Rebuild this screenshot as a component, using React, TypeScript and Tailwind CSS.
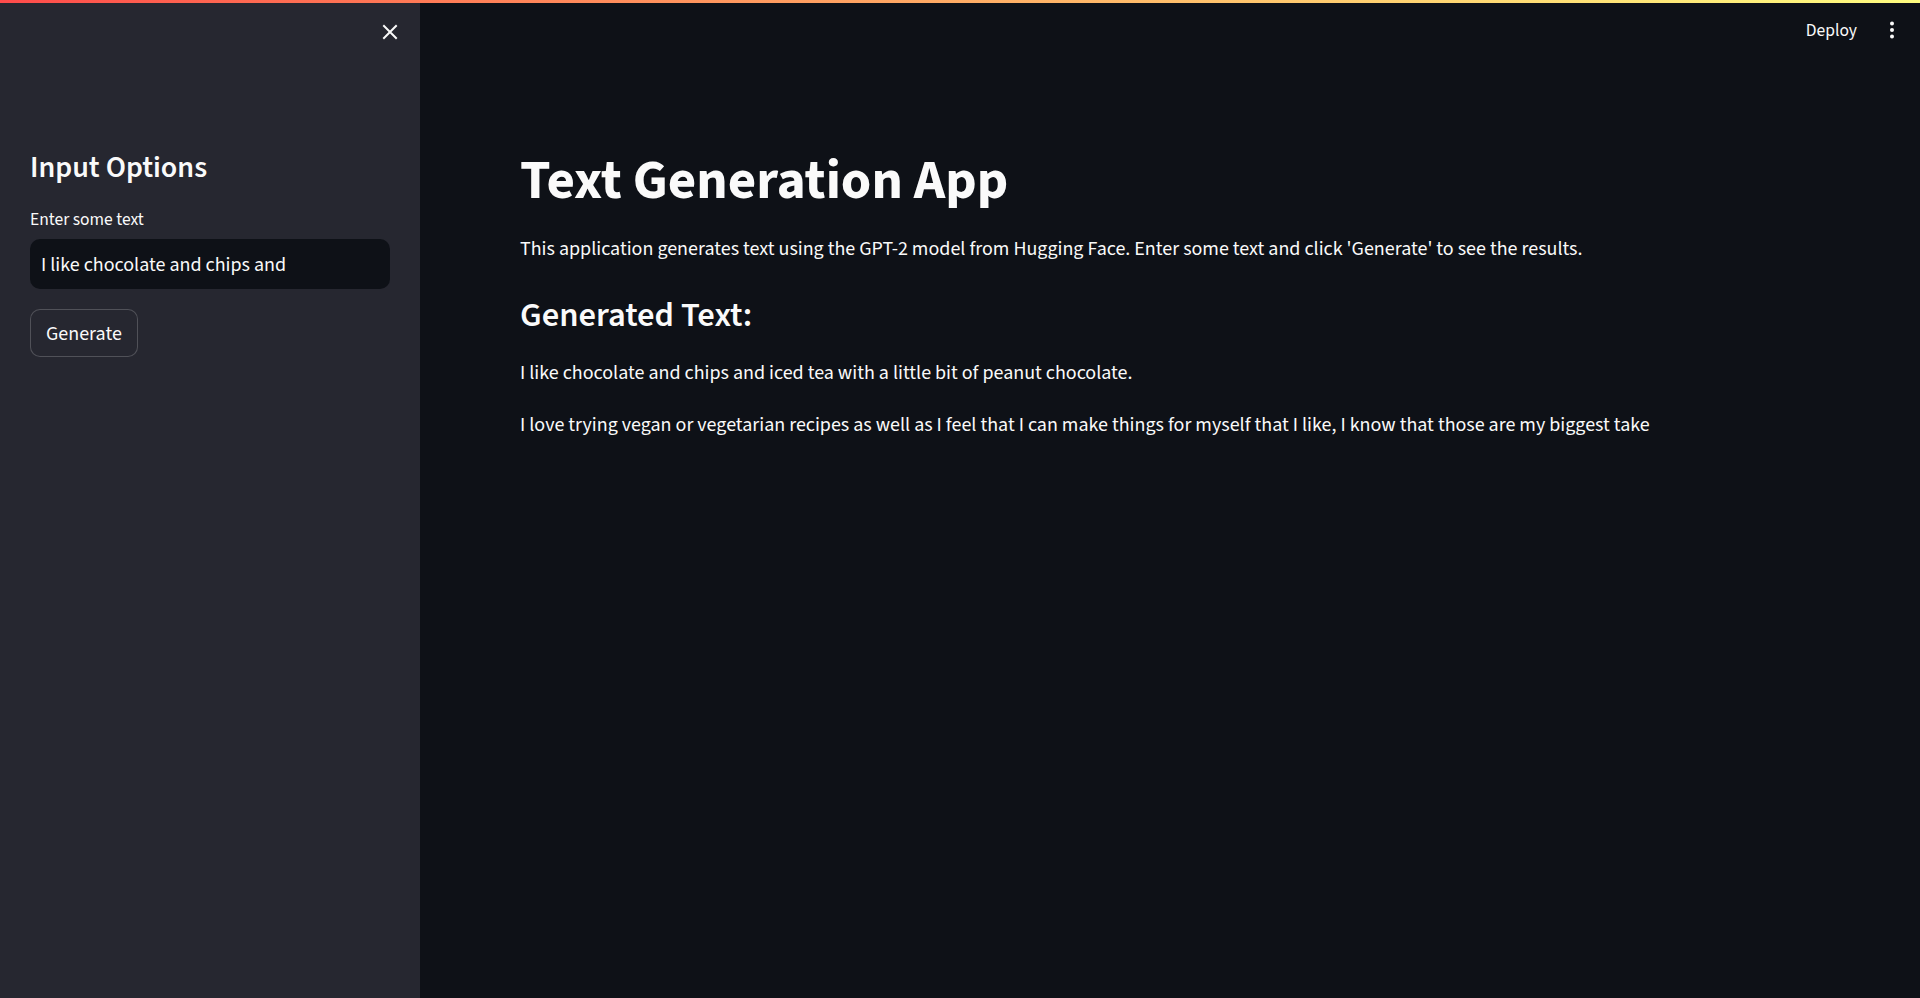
import React from 'react';

const font = { fontFamily: '"Source Sans 3", "Source Sans Pro", Lato, sans-serif' };

function CloseIcon() {
  return (
    <svg width="16" height="16" viewBox="0 0 16 16" fill="none" stroke="#fafafa" strokeWidth="2" strokeLinecap="square">
      <path d="M2 2 L14 14 M14 2 L2 14" />
    </svg>
  );
}

function KebabIcon() {
  return (
    <svg width="24" height="24" viewBox="0 0 24 24" fill="#fafafa">
      <circle cx="12" cy="5.5" r="2" />
      <circle cx="12" cy="12" r="2" />
      <circle cx="12" cy="18.5" r="2" />
    </svg>
  );
}

export default function App() {
  return (
    <div className="relative flex h-[998px] w-full overflow-hidden bg-[#0e1117] text-[#fafafa]" style={font}>
      {/* top decoration */}
      <div className="fixed inset-x-0 top-0 z-10 h-[3px] bg-gradient-to-r from-[#ff4b4b] to-[#fffd80]" />

      {/* Sidebar */}
      <aside className="flex w-[420px] shrink-0 flex-col bg-[#262730]">
        <div className="flex h-[64px] items-center justify-end pr-[18px]">
          <button className="flex h-[24px] w-[24px] items-center justify-center">
            <CloseIcon />
          </button>
        </div>
        <div className="flex flex-col px-[30px] pt-[86px]">
          <h2 className="text-[30px] font-semibold leading-[36px]">Input Options</h2>
          <label className="mt-[20px] text-[17.5px] leading-[28px]">Enter some text</label>
          <div className="mt-[5px] flex h-[50px] w-[360px] items-center rounded-[10px] bg-[#0e1117] px-[11px] pt-[1px] text-[20px]">
            I like chocolate and chips and
          </div>
          <div className="mt-[20px]">
            <button className="flex h-[48px] items-center rounded-[10px] border border-[#fafafa]/20 bg-[#262730] px-[15px] pt-[1px] text-[20px]">
              Generate
            </button>
          </div>
        </div>
      </aside>

      {/* Main */}
      <main className="flex min-w-0 flex-1 flex-col">
        <header className="flex h-[60px] items-center justify-end gap-[23px] pr-[16px]">
          <span className="pt-[2px] text-[17.5px]">Deploy</span>
          <KebabIcon />
        </header>
        <div className="flex flex-col px-[100px] pt-[88px]">
          <h1 className="text-[55px] font-bold leading-[66px]">Text Generation App</h1>
          <p className="mt-[19px] text-[20px] leading-[32px]">
            This application generates text using the GPT-2 model from Hugging Face. Enter some text and click 'Generate' to see the results.
          </p>
          <h3 className="mt-[30px] text-[34.5px] font-semibold leading-[42px]">Generated Text:</h3>
          <p className="mt-[20px] text-[20px] leading-[32px]">
            I like chocolate and chips and iced tea with a little bit of peanut chocolate.
          </p>
          <p className="mt-[20px] text-[20px] leading-[32px]">
            I love trying vegan or vegetarian recipes as well as I feel that I can make things for myself that I like, I know that those are my biggest take
          </p>
        </div>
      </main>
    </div>
  );
}
